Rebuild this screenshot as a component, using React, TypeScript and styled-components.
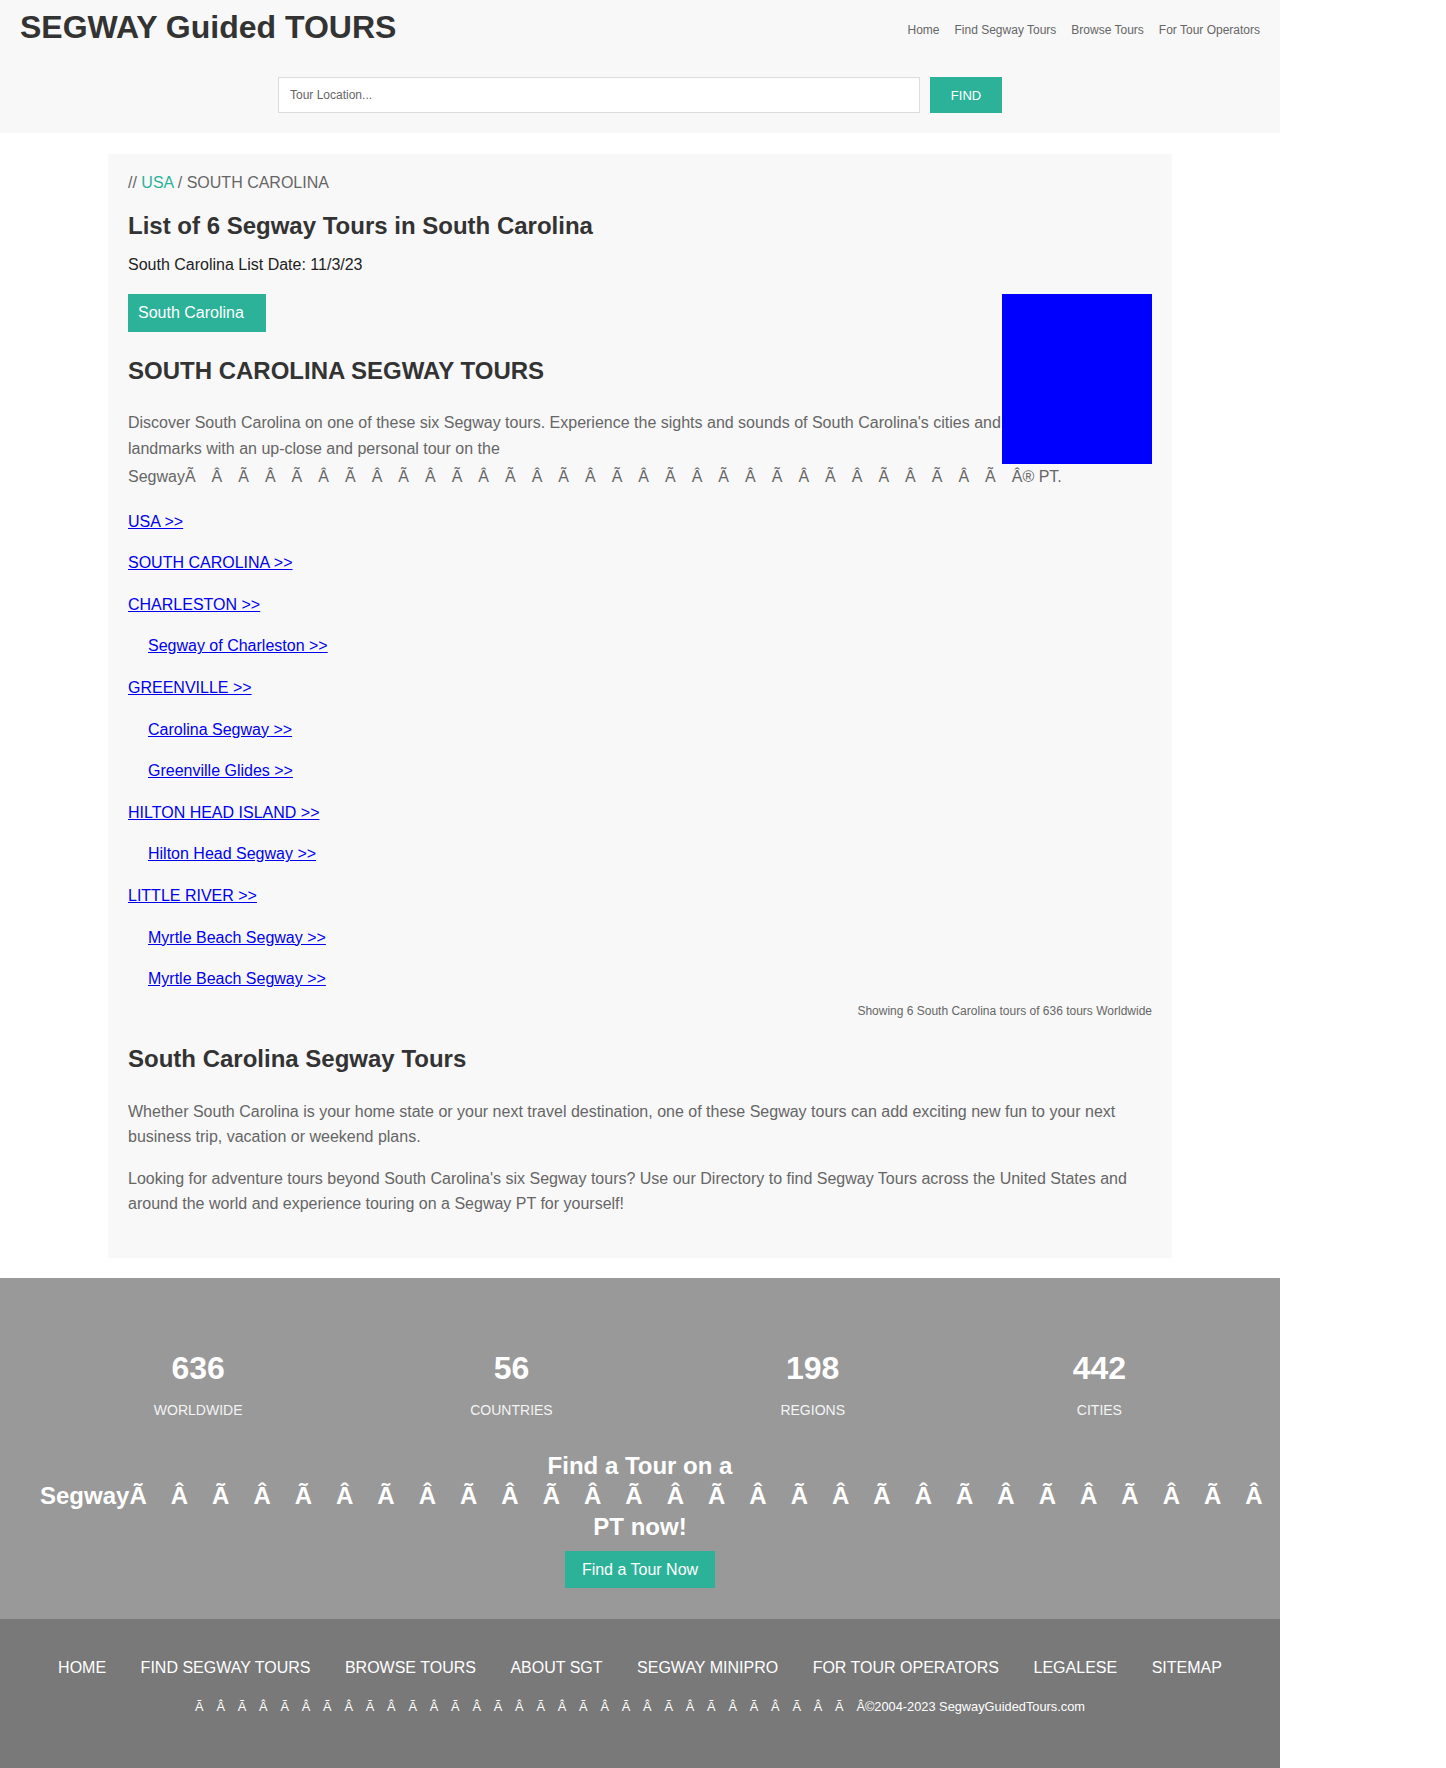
import React from "react";
import styled, { createGlobalStyle } from "styled-components";

const TEAL = "#2cb299";

const GlobalStyle = createGlobalStyle`
  html, body {
    margin: 0;
    padding: 0;
    background: #ffffff;
  }
  body {
    font-family: "Liberation Sans", Arial, Helvetica, sans-serif;
    font-size: 16px;
    color: #333;
  }
`;

const Page = styled.div`
  width: 1280px;
`;

/* ---------- Header ---------- */
const Header = styled.header`
  background: #f8f8f8;
  padding: 9px 0 20px;
`;

const TopRow = styled.div`
  display: flex;
  justify-content: space-between;
  align-items: flex-start;
  height: 36px;
  padding: 0 20px 0 20px;
`;

const Logo = styled.h1`
  margin: 0;
  font-size: 32px;
  line-height: 36px;
  font-weight: 700;
  color: #333;
`;

const Nav = styled.nav`
  display: flex;
  gap: 15px;
  margin-top: 13px;
`;

const NavLink = styled.a`
  font-size: 12px;
  line-height: 16px;
  color: #666;
  text-decoration: none;
`;

const SearchRow = styled.form`
  display: flex;
  justify-content: center;
  gap: 10px;
  margin: 32px 0 0;
`;

const SearchInput = styled.input`
  box-sizing: border-box;
  width: 642px;
  height: 36px;
  border: 1px solid #dcdcdc;
  background: #fff;
  padding: 0 11px;
  font-family: inherit;
  font-size: 12px;
  color: #333;
  outline: none;
  &::placeholder {
    color: #666;
  }
`;

const FindButton = styled.button`
  width: 72px;
  height: 36px;
  border: none;
  background: ${TEAL};
  color: #fff;
  font-family: inherit;
  font-size: 13px;
  cursor: pointer;
`;

/* ---------- Card ---------- */
const Card = styled.main`
  box-sizing: border-box;
  width: 1064px;
  margin: 21px auto 20px;
  background: #f8f8f8;
  padding: 16px 20px 25px;
`;

const Breadcrumb = styled.p`
  margin: 0;
  font-size: 16px;
  line-height: 1.6;
  color: #666;
`;

const CrumbLink = styled.a`
  color: ${TEAL};
  text-decoration: none;
`;

const Title = styled.h1<{ $mt: number; $mb: number }>`
  margin: ${(p) => p.$mt}px 0 ${(p) => p.$mb}px;
  font-size: 24px;
  line-height: 1.2;
  font-weight: 700;
  color: #333;
`;

const DateLine = styled.p`
  margin: 0;
  font-size: 16px;
  line-height: 1.6;
  color: #222;
`;

const FloatArea = styled.div`
  margin-top: 16px;
`;

const AdBox = styled.div`
  float: right;
  width: 150px;
  height: 170px;
  background: #0000ff;
`;

const Tag = styled.div`
  width: fit-content;
  background: ${TEAL};
  color: #fff;
  font-size: 16px;
  line-height: 1.6;
  padding: 6px 22px 6px 10px;
`;

const Para = styled.p<{ $mb?: number }>`
  margin: 0 0 ${(p) => p.$mb ?? 0}px;
  font-size: 16px;
  line-height: 1.6;
  color: #666;
`;

const NoWrap = styled.span`
  white-space: nowrap;
`;

const LinkList = styled.div`
  margin-top: 19px;
  clear: both;
`;

const LinkRow = styled.p<{ $indent?: boolean }>`
  margin: 0 0 16px;
  padding-left: ${(p) => (p.$indent ? 20 : 0)}px;
  font-size: 16px;
  line-height: 1.6;
  &:last-child {
    margin-bottom: 0;
  }
`;

const TourLink = styled.a`
  color: #0000ee;
  text-decoration: underline;
`;

const Showing = styled.p`
  margin: 10px 0 0;
  text-align: right;
  font-size: 12px;
  line-height: 19px;
  color: #666;
`;

/* ---------- Stats band ---------- */
const StatsBand = styled.section`
  background: #999999;
  padding: 71px 40px 31px;
  text-align: center;
`;

const StatsRow = styled.div`
  display: flex;
  justify-content: space-around;
`;

const Stat = styled.div`
  text-align: center;
  color: #fff;
`;

const StatNumber = styled.div`
  font-size: 32px;
  font-weight: 700;
  line-height: 38px;
`;

const StatLabel = styled.div`
  margin-top: 13px;
  font-size: 14px;
  line-height: 20px;
  color: #f4f4f4;
`;

const Tagline = styled.h2`
  margin: 31px 0 9px;
  font-size: 24px;
  font-weight: 700;
  line-height: 30.5px;
  color: #fff;
  text-align: center;
`;

const CTA = styled.a`
  display: inline-block;
  height: 37px;
  line-height: 37px;
  padding: 0 17px;
  background: ${TEAL};
  color: #fff;
  font-size: 16px;
  text-decoration: none;
`;

/* ---------- Footer ---------- */
const Footer = styled.footer`
  background: #797979;
  padding: 39px 0 53px;
  text-align: center;
`;

const FooterNav = styled.nav`
  display: flex;
  justify-content: center;
  gap: 34.5px;
`;

const FooterLink = styled.a`
  color: #fff;
  font-size: 16px;
  line-height: 20px;
  text-decoration: none;
`;

const Copyright = styled.p`
  margin: 20px 0 0;
  font-size: 12.8px;
  line-height: 18px;
  color: #fff;
`;

const EM = "\u2003";
const mojibake = (pairs: number) => {
  let s = "";
  for (let i = 0; i < pairs; i++) {
    s += "Ã" + EM + "Â" + (i < pairs - 1 ? EM : "");
  }
  return s;
};

const links: { label: string; indent?: boolean }[] = [
  { label: "USA >>" },
  { label: "SOUTH CAROLINA >>" },
  { label: "CHARLESTON >>" },
  { label: "Segway of Charleston >>", indent: true },
  { label: "GREENVILLE >>" },
  { label: "Carolina Segway >>", indent: true },
  { label: "Greenville Glides >>", indent: true },
  { label: "HILTON HEAD ISLAND >>" },
  { label: "Hilton Head Segway >>", indent: true },
  { label: "LITTLE RIVER >>" },
  { label: "Myrtle Beach Segway >>", indent: true },
  { label: "Myrtle Beach Segway >>", indent: true },
];

const stats = [
  { n: "636", l: "WORLDWIDE" },
  { n: "56", l: "COUNTRIES" },
  { n: "198", l: "REGIONS" },
  { n: "442", l: "CITIES" },
];

const footerLinks = [
  "HOME",
  "FIND SEGWAY TOURS",
  "BROWSE TOURS",
  "ABOUT SGT",
  "SEGWAY MINIPRO",
  "FOR TOUR OPERATORS",
  "LEGALESE",
  "SITEMAP",
];

export default function App() {
  return (
    <Page>
      <GlobalStyle />
      <Header>
        <TopRow>
          <Logo>SEGWAY Guided TOURS</Logo>
          <Nav>
            <NavLink href="#">Home</NavLink>
            <NavLink href="#">Find Segway Tours</NavLink>
            <NavLink href="#">Browse Tours</NavLink>
            <NavLink href="#">For Tour Operators</NavLink>
          </Nav>
        </TopRow>
        <SearchRow onSubmit={(e) => e.preventDefault()}>
          <SearchInput placeholder="Tour Location..." />
          <FindButton type="submit">FIND</FindButton>
        </SearchRow>
      </Header>

      <Card>
        <Breadcrumb>
          // <CrumbLink href="#">USA</CrumbLink> / SOUTH CAROLINA
        </Breadcrumb>
        <Title $mt={16} $mb={12}>List of 6 Segway Tours in South Carolina</Title>
        <DateLine>South Carolina List Date: 11/3/23</DateLine>

        <FloatArea>
          <AdBox />
          <Tag>South Carolina</Tag>
          <Title $mt={25} $mb={25}>SOUTH CAROLINA SEGWAY TOURS</Title>
          <Para>
            Discover South Carolina on one of these six Segway tours. Experience the sights and
            sounds of South Carolina's cities and landmarks with an up-close and personal tour on
            the <NoWrap>{"Segway" + mojibake(16) + "®"}</NoWrap> PT.
          </Para>
        </FloatArea>

        <LinkList>
          {links.map((l, i) => (
            <LinkRow key={i} $indent={l.indent}>
              <TourLink href="#">{l.label}</TourLink>
            </LinkRow>
          ))}
        </LinkList>

        <Showing>Showing 6 South Carolina tours of 636 tours Worldwide</Showing>

        <Title $mt={24} $mb={25}>South Carolina Segway Tours</Title>
        <Para $mb={16}>
          Whether South Carolina is your home state or your next travel destination, one of these
          Segway tours can add exciting new fun to your next business trip, vacation or weekend
          plans.
        </Para>
        <Para $mb={16}>
          Looking for adventure tours beyond South Carolina's six Segway tours? Use our Directory to
          find Segway Tours across the United States and around the world and experience touring on
          a Segway PT for yourself!
        </Para>
      </Card>

      <StatsBand>
        <StatsRow>
          {stats.map((s) => (
            <Stat key={s.l}>
              <StatNumber>{s.n}</StatNumber>
              <StatLabel>{s.l}</StatLabel>
            </Stat>
          ))}
        </StatsRow>
        <Tagline>
          Find a Tour on a <NoWrap>{"Segway" + mojibake(14)}</NoWrap> PT now!
        </Tagline>
        <CTA href="#">Find a Tour Now</CTA>
      </StatsBand>

      <Footer>
        <FooterNav>
          {footerLinks.map((f) => (
            <FooterLink key={f} href="#">
              {f}
            </FooterLink>
          ))}
        </FooterNav>
        <Copyright>{mojibake(16) + "©2004-2023 SegwayGuidedTours.com"}</Copyright>
      </Footer>
    </Page>
  );
}
